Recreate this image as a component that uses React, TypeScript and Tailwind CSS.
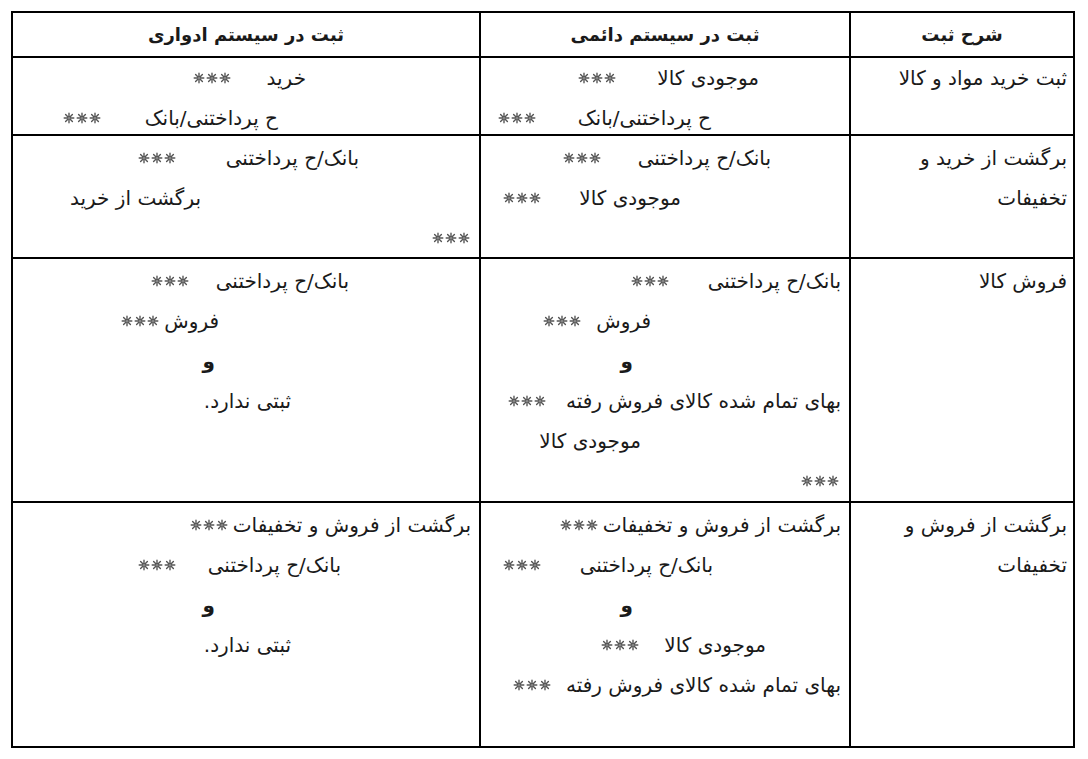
import React from 'react'

type L = { t?: string; s?: boolean; b?: boolean; c: string; w?: string }

const FONT = "font-['DejaVu_Sans',sans-serif]"

function Star() {
  return (
    <svg viewBox="0 0 12 12" className="h-[12px] w-[12px]" fill="none" stroke="#555" strokeWidth="1.4" strokeLinecap="round">
      <path d="M6 1.2v3.2M6 7.6v3.2M1.2 6h3.2M7.6 6h3.2M2.6 2.6l2.2 2.2M7.2 7.2l2.2 2.2M9.4 2.6L7.2 4.8M4.8 7.2L2.6 9.4" />
      <circle cx="6" cy="6" r="0.9" fill="#555" stroke="none" />
    </svg>
  )
}

function Stars() {
  return (
    <span className="ms-[5px] flex shrink-0 gap-[1px]">
      <Star />
      <Star />
      <Star />
    </span>
  )
}

function Line({ t, s, b, c, w }: L) {
  return (
    <div className={`flex h-10 items-center ${c}`}>
      {t && <span className={`shrink-0 ${w ?? ''} ${b ? 'font-bold' : ''}`}>{t}</span>}
      {s && <Stars />}
    </div>
  )
}

function Cell({ lines, cls }: { lines: L[]; cls: string }) {
  return (
    <div className={`bg-white ${cls}`}>
      {lines.map((l, i) => (
        <Line key={i} {...l} />
      ))}
    </div>
  )
}

function Desc({ text, cls }: { text: string[]; cls: string }) {
  return (
    <div className={`bg-white pr-[6px] ${cls}`}>
      {text.map((t, i) => (
        <div key={i} className="flex h-10 items-center">{t}</div>
      ))}
    </div>
  )
}

const rows = [
  {
    h: 'h-[76px]',
    pt: 'pt-0',
    desc: ['ثبت خرید مواد و کالا'],
    perm: [
      { t: 'موجودی کالا', s: true, c: 'pr-[90px]', w: 'min-w-[138px]' },
      { t: 'ح پرداختنی/بانک', s: true, c: 'pr-[138px]', w: 'min-w-[170px]' },
    ],
    peri: [
      { t: 'خرید', s: true, c: 'pr-[173px]', w: 'min-w-[70px]' },
      { t: 'ح پرداختنی/بانک', s: true, c: 'pr-[201px]', w: 'min-w-[172px]' },
    ],
  },
  {
    h: 'h-[121px]',
    pt: 'pt-[2px]',
    desc: ['برگشت از خرید و', 'تخفیفات'],
    perm: [
      { t: 'بانک/ح پرداختنی', s: true, c: 'pr-[78px]', w: 'min-w-[165px]' },
      { t: 'موجودی کالا', s: true, c: 'pr-[168px]', w: 'min-w-[135px]' },
    ],
    peri: [
      { t: 'بانک/ح پرداختنی', s: true, c: 'pr-[120px]', w: 'min-w-[178px]' },
      { t: 'برگشت از خرید', c: 'pr-[278px]' },
      { s: true, c: 'pr-[4px]' },
    ],
  },
  {
    h: 'h-[242px]',
    pt: 'pt-[2px]',
    desc: ['فروش کالا'],
    perm: [
      { t: 'بانک/ح پرداختنی', s: true, c: 'pr-[8px]', w: 'min-w-[167px]' },
      { t: 'فروش', s: true, c: 'pr-[198px]', w: 'min-w-[65px]' },
      { t: 'و', b: true, c: 'pr-[216px]' },
      { t: 'بهای تمام شده کالای فروش رفته', s: true, c: 'pr-[8px]', w: 'min-w-[290px]' },
      { t: 'موجودی کالا', c: 'pr-[208px]' },
      { s: true, c: 'pr-[5px]' },
    ],
    peri: [
      { t: 'بانک/ح پرداختنی', s: true, c: 'pr-[130px]', w: 'min-w-[155px]' },
      { t: 'فروش', s: true, c: 'pr-[260px]', w: 'min-w-[51px]' },
      { t: 'و', b: true, c: 'pr-[264px]' },
      { t: 'ثبتی ندارد.', c: 'pr-[188px]' },
    ],
  },
  {
    h: 'h-[243px]',
    pt: 'pt-[2px]',
    desc: ['برگشت از فروش و', 'تخفیفات'],
    perm: [
      { t: 'برگشت از فروش و تخفیفات', s: true, c: 'pr-[8px]', w: 'min-w-[232px]' },
      { t: 'بانک/ح پرداختنی', s: true, c: 'pr-[136px]', w: 'min-w-[167px]' },
      { t: 'و', b: true, c: 'pr-[216px]' },
      { t: 'موجودی کالا', s: true, c: 'pr-[83px]', w: 'min-w-[122px]' },
      { t: 'بهای تمام شده کالای فروش رفته', s: true, c: 'pr-[8px]', w: 'min-w-[285px]' },
    ],
    peri: [
      { t: 'برگشت از فروش و تخفیفات', s: true, c: 'pr-[8px]', w: 'min-w-[232px]' },
      { t: 'بانک/ح پرداختنی', s: true, c: 'pr-[138px]', w: 'min-w-[160px]' },
      { t: 'و', b: true, c: 'pr-[264px]' },
      { t: 'ثبتی ندارد.', c: 'pr-[188px]' },
    ],
  },
]

export default function App() {
  return (
    <div className={`h-[759px] w-[1088px] bg-white pl-[11px] pt-[11px] text-[20px] text-[#1a1a1a] ${FONT}`}>
      <div
        dir="rtl"
        className="grid w-[1064px] grid-cols-[222px_368px_466px] gap-[2px] bg-black p-[2px]"
      >
        <div className="flex h-[43px] items-center justify-center bg-white text-[18px] font-bold">شرح ثبت</div>
        <div className="flex h-[43px] items-center justify-center bg-white text-[18px] font-bold">ثبت در سیستم دائمی</div>
        <div className="flex h-[43px] items-center justify-center bg-white text-[18px] font-bold">ثبت در سیستم ادواری</div>
        {rows.map((r, i) => (
          <React.Fragment key={i}>
            <div className={r.h}>
              <Desc text={r.desc} cls={`h-full ${r.pt}`} />
            </div>
            <div className={r.h}>
              <Cell lines={r.perm} cls={`h-full ${r.pt}`} />
            </div>
            <div className={r.h}>
              <Cell lines={r.peri} cls={`h-full ${r.pt}`} />
            </div>
          </React.Fragment>
        ))}
      </div>
    </div>
  )
}
